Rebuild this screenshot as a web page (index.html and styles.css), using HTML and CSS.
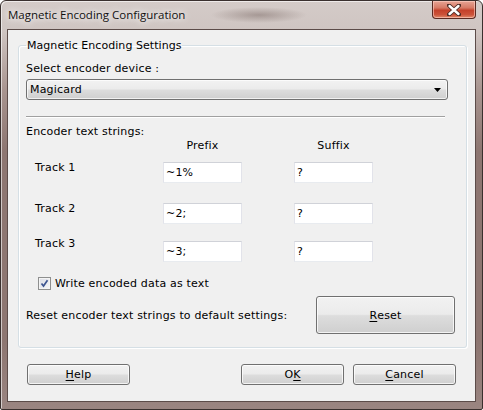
FILE: index.html
```html
<!DOCTYPE html>
<html>
<head>
<meta charset="utf-8">
<link rel="stylesheet" href="styles.css">
</head>
<body>
<div class="window">
  <div class="titlebar">
    <span class="title">Magnetic Encoding Configuration</span>
    <div class="close">
      <svg width="14" height="12" viewBox="0 0 14 12">
        <path d="M2 1.5 L12 10.5 M12 1.5 L2 10.5" stroke="#4a2a24" stroke-width="4.2" stroke-linecap="round"/>
        <path d="M2.5 2 L11.5 10 M11.5 2 L2.5 10" stroke="#ffffff" stroke-width="2.4" stroke-linecap="round"/>
      </svg>
    </div>
  </div>
  <div class="client">
    <fieldset class="group">
      <legend>Magnetic Encoding Settings</legend>
      <div class="line select-label">Select encoder device :</div>
      <div class="combo">
        <span>Magicard</span>
        <svg class="arrow" width="7" height="4" viewBox="0 0 7 4"><path d="M0 0 H7 L3.5 4 Z" fill="#000"/></svg>
      </div>
      <div class="separator"></div>
      <div class="line strings-label">Encoder text strings:</div>
      <div class="track-grid head-row">
        <span></span>
        <span class="col-head">Prefix</span>
        <span class="col-head">Suffix</span>
      </div>
      <div class="track-grid row1">
        <span class="track-label">Track 1</span>
        <div class="field">~1%</div>
        <div class="field">?</div>
      </div>
      <div class="track-grid row2">
        <span class="track-label">Track 2</span>
        <div class="field">~2;</div>
        <div class="field">?</div>
      </div>
      <div class="track-grid row3">
        <span class="track-label lift">Track 3</span>
        <div class="field">~3;</div>
        <div class="field">?</div>
      </div>
      <div class="check-row">
        <span class="checkbox">
          <svg width="11" height="11" viewBox="0 0 11 11"><path d="M2.5 5.5 L4.5 8 L8.5 2.2" stroke="#3d5591" stroke-width="1.7" fill="none"/></svg>
        </span>
        <span>Write encoded data as text</span>
      </div>
      <div class="reset-row">
        <span>Reset encoder text strings to default settings:</span>
        <div class="btn reset"><u>R</u>eset</div>
      </div>
    </fieldset>
    <div class="buttons">
      <div class="btn"><u>H</u>elp</div>
      <div class="btn ok">O<u>K</u></div>
      <div class="btn"><u>C</u>ancel</div>
    </div>
  </div>
</div>
</body>
</html>
```

FILE: styles.css
```css
html, body {
  margin: 0;
  padding: 0;
}
body {
  width: 483px;
  height: 410px;
  overflow: hidden;
  font-family: "DejaVu Sans", sans-serif;
  font-size: 11px;
  letter-spacing: 0.18px;
  color: #000;
  background: #fff;
}
.window {
  width: 483px;
  height: 410px;
  box-sizing: border-box;
  border: 1px solid #3a302e;
  border-radius: 6px 6px 2px 2px;
  padding: 0 6px 7px;
  display: flex;
  flex-direction: column;
  background:
    radial-gradient(ellipse 48px 8px at 258px 14px, rgba(95, 75, 70, 0.38), rgba(95, 75, 70, 0)),
    linear-gradient(to bottom, #d4cbc8 0, #cfc5c2 30px, #a8948f 90px, #8d7671 150px, #8d7671 340px, #9a8581 100%);
  box-shadow: inset 1px 1px 0 rgba(255,255,255,0.6);
}
.titlebar {
  height: 28px;
  display: flex;
  align-items: flex-start;
  flex: none;
}
.title {
  font-family: "Open Sans", "DejaVu Sans", sans-serif;
  font-size: 11.5px;
  letter-spacing: 0;
  line-height: 16px;
  margin: 6px 0 0 1px;
  color: #111;
  text-shadow: 0 0 6px #fff, 0 0 10px rgba(255,255,255,0.9);
}
.close {
  margin-left: auto;
  margin-right: 0;
  width: 44px;
  height: 18px;
  box-sizing: border-box;
  border: 1px solid #5a2a22;
  border-top: none;
  border-radius: 0 0 4px 4px;
  background: linear-gradient(to bottom, #e8a595 0, #d67a66 40%, #c4412a 55%, #cc5239 80%, #e08a6a 100%);
  box-shadow: inset 0 0 0 1px rgba(255, 210, 200, 0.6);
  display: flex;
  align-items: center;
  justify-content: center;
}
.client {
  flex: 1;
  border: 1px solid #5c4c49;
  background: #f0f0f0;
  display: flex;
  flex-direction: column;
}
.group {
  margin: 9px 8px 0 10px;
  padding: 0 11px 13px 7px;
  border: 1px solid #d5dfe5;
  border-radius: 3px;
  box-shadow: inset 1px 1px 0 #fff, 1px 1px 0 #fff;
  min-width: 0;
  display: flex;
  flex-direction: column;
  align-items: flex-start;
}
.group legend {
  padding: 0 1px;
  line-height: 13px;
  font-size: 11px;
  letter-spacing: 0.05px;
}
.line {
  line-height: 13px;
}
.select-label {
  margin-top: 10px;
}
.combo {
  margin-top: 4px;
  width: 422px;
  height: 21px;
  box-sizing: border-box;
  border: 1px solid #707070;
  border-radius: 3px;
  background: linear-gradient(to bottom, #f2f2f2 0, #ebebeb 48%, #dddddd 52%, #cfcfcf 100%);
  box-shadow: inset 0 0 0 1px rgba(255,255,255,0.7);
  display: flex;
  align-items: center;
  padding: 0 6px 0 3px;
}
.combo .arrow {
  margin-left: auto;
}
.separator {
  margin-top: 16px;
  width: 419px;
  height: 1px;
  background: #a0a0a0;
  border-bottom: 1px solid #fff;
}
.strings-label {
  margin-top: 7px;
}
.track-grid {
  display: grid;
  grid-template-columns: 85px 79px 79px;
  column-gap: 52px;
  align-items: start;
}
.head-row {
  margin-top: 1px;
  line-height: 13px;
}
.col-head {
  text-align: center;
}
.row1 { margin-top: 10px; }
.row2 { margin-top: 20px; }
.row3 { margin-top: 17px; }
.track-label {
  margin-left: 9px;
  line-height: 13px;
  margin-top: -1px;
}
.track-label.lift {
  margin-top: -4px;
}
.field {
  height: 21px;
  box-sizing: border-box;
  background: #fff;
  border: 1px solid #e2e3ea;
  border-top-color: #d0d2d8;
  border-bottom-color: #e8ebef;
  line-height: 19px;
  padding-left: 2px;
}
.check-row {
  margin-top: 15px;
  margin-left: 12px;
  display: flex;
  align-items: center;
  gap: 4px;
  line-height: 13px;
}
.checkbox {
  width: 13px;
  height: 13px;
  box-sizing: border-box;
  border: 1px solid #8e8f8f;
  background: linear-gradient(135deg, #dcdee6 0, #f4f5f8 100%);
  box-shadow: inset 0 0 0 1px #f4f4f4;
  display: flex;
  align-items: center;
  justify-content: center;
}
.reset-row {
  margin-top: 6px;
  align-self: stretch;
  display: flex;
  align-items: center;
  justify-content: space-between;
}
.btn {
  height: 21px;
  box-sizing: border-box;
  border: 1px solid #707070;
  border-radius: 3px;
  background: linear-gradient(to bottom, #f2f2f2 0, #ebebeb 48%, #dddddd 52%, #cfcfcf 100%);
  box-shadow: inset 0 0 0 1px rgba(255,255,255,0.75);
  display: flex;
  align-items: center;
  justify-content: center;
  width: 103px;
}
.btn.reset {
  width: 139px;
  height: 38px;
}
.buttons {
  margin-top: 16px;
  padding: 0 19px;
  display: flex;
  gap: 9px;
}
.buttons .ok {
  margin-left: auto;
}
u {
  text-decoration-thickness: 1px;
  text-underline-offset: 2px;
}
```
